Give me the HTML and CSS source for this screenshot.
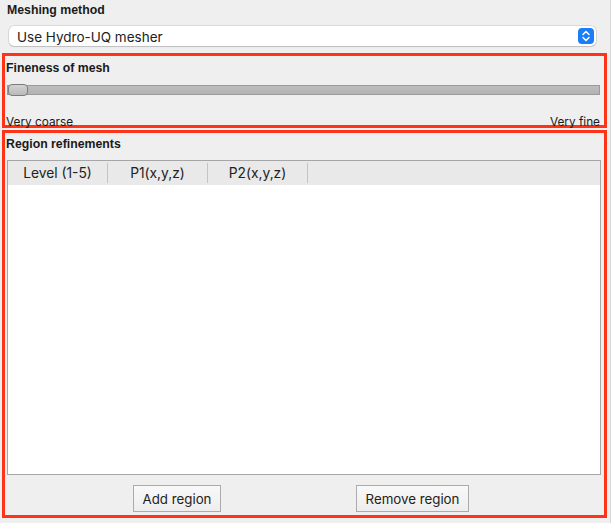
FILE: index.html
```html
<!DOCTYPE html>
<html>
<head>
<meta charset="utf-8">
<link rel="stylesheet" href="styles.css">
</head>
<body>
<div class="window">
  <div class="label-bold method-label">Meshing method</div>
  <div class="combo">
    <span class="combo-text">Use Hydro-UQ mesher</span>
    <span class="stepper">
      <svg width="16" height="16" viewBox="0 0 16 16">
        <rect x="0" y="0" width="16" height="16" rx="4" fill="#1b7df7"/>
        <path d="M5 6.5 L8 3.5 L11 6.5" fill="none" stroke="#fff" stroke-width="1.5" stroke-linecap="round" stroke-linejoin="round"/>
        <path d="M5 9.5 L8 12.5 L11 9.5" fill="none" stroke="#fff" stroke-width="1.5" stroke-linecap="round" stroke-linejoin="round"/>
      </svg>
    </span>
  </div>

  <div class="box fineness">
    <div class="label-bold">Fineness of mesh</div>
    <div class="slider">
      <div class="track"></div>
      <div class="handle"></div>
    </div>
    <div class="slider-labels">
      <span>Very coarse</span>
      <span>Very fine</span>
    </div>
  </div>

  <div class="box regions">
    <div class="label-bold">Region refinements</div>
    <div class="table">
      <div class="thead">
        <div class="th">Level (1-5)</div>
        <div class="th">P1(x,y,z)</div>
        <div class="th">P2(x,y,z)</div>
      </div>
      <div class="tbody"></div>
    </div>
    <div class="buttons">
      <button class="btn btn-add">Add region</button>
      <button class="btn btn-remove">Remove region</button>
    </div>
  </div>
</div>
</body>
</html>
```
FILE: styles.css
```css
html, body {
  margin: 0;
  padding: 0;
  background: #efefef;
}
body {
  font-family: Inter, "Liberation Sans", Arial, sans-serif;
  color: #1a1a1a;
}
.window {
  width: 611px;
  height: 523px;
  box-sizing: border-box;
  padding-top: 3px;
  border-right: 1px solid #d8d8d8;
}
.label-bold {
  font-family: "Liberation Sans", Arial, sans-serif;
  font-weight: bold;
  font-size: 12.3px;
  line-height: 14px;
}
.method-label {
  margin-left: 7px;
}
.combo {
  margin: 9px 0 0 9px;
  width: 587px;
  height: 20px;
  box-sizing: border-box;
  background: #fff;
  border-radius: 5px;
  box-shadow: 0 0 0 0.5px rgba(0,0,0,0.18), 0 1px 1px rgba(0,0,0,0.12);
  display: flex;
  align-items: center;
  justify-content: space-between;
  padding: 0 2px 0 8px;
}
.combo-text {
  font-size: 13.5px;
  line-height: 20px;
  padding-top: 1px;
  color: #222;
}
.stepper {
  display: flex;
}
.stepper svg {
  display: block;
}
.box {
  margin-left: 2px;
  width: 605px;
  box-sizing: border-box;
  border: 3px solid #ff3318;
}
.fineness {
  margin-top: 7px;
  height: 75px;
  padding: 5px 4px 0 1px;
}
.slider {
  position: relative;
  margin: 9px 0 0 1px;
  height: 13px;
}
.track {
  position: absolute;
  left: 0;
  right: 0;
  top: 1px;
  height: 10px;
  box-sizing: border-box;
  background: linear-gradient(#bdbdbd, #b3b3b3);
  border: 1px solid #9a9a9a;
}
.handle {
  position: absolute;
  left: 1px;
  top: 0;
  width: 20px;
  height: 12px;
  box-sizing: border-box;
  background: linear-gradient(#d2d2d2, #b9b9b9);
  border: 1px solid #7c7c7c;
  border-radius: 4px;
}
.slider-labels {
  display: flex;
  justify-content: space-between;
  font-size: 11.8px;
  line-height: 14px;
  margin-top: 18px;
}
.regions {
  margin-top: 2px;
  height: 388px;
  padding: 4px 3px 0 1px;
  display: flex;
  flex-direction: column;
}
.table {
  margin: 9px 0 0 1px;
  height: 315px;
  box-sizing: border-box;
  border: 1px solid #a6a6a6;
  background: #fff;
  display: flex;
  flex-direction: column;
}
.thead {
  height: 24px;
  background: #e9e9e9;
  display: flex;
  align-items: center;
  flex: none;
}
.th {
  width: 100px;
  box-sizing: border-box;
  border-right: 1px solid #c4c4c4;
  height: 20px;
  text-align: center;
  font-size: 13.8px;
  line-height: 20px;
  color: #222;
}
.tbody {
  flex: 1;
}
.buttons {
  display: flex;
  margin-top: 10px;
  padding-left: 127px;
  gap: 135px;
}
.btn {
  font-family: Inter, "Liberation Sans", Arial, sans-serif;
  font-size: 13.3px;
  height: 27px;
  box-sizing: border-box;
  background: linear-gradient(#f9f9f9, #ededed);
  border: 1px solid #ababab;
  border-radius: 0;
  color: #222;
  padding: 0;
}
.btn-add {
  width: 88px;
}
.btn-remove {
  width: 113px;
}
```
